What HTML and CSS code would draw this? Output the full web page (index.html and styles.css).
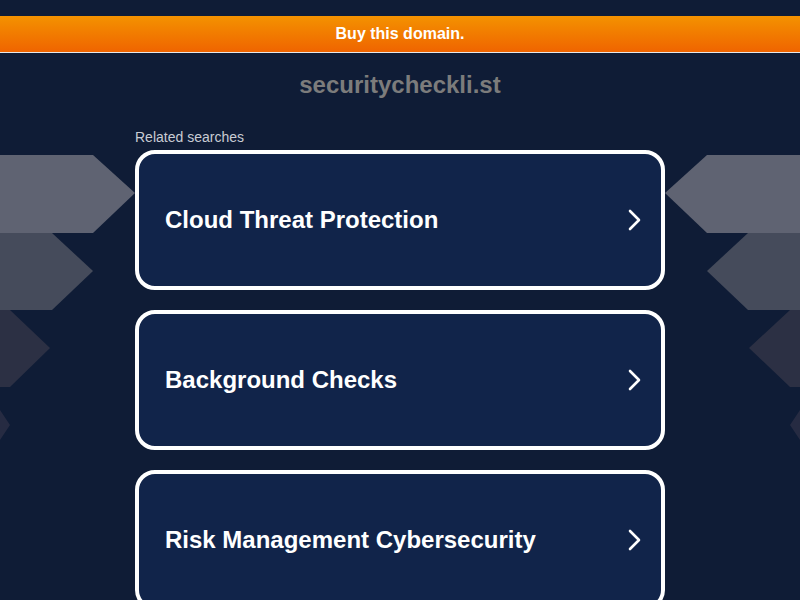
FILE: index.html
```html
<!DOCTYPE html>
<html>
<head>
<meta charset="utf-8">
<link rel="stylesheet" href="styles.css">
</head>
<body>
<div class="topgap"></div>
<div class="buybar">Buy this domain.</div>
<div class="domain">securitycheckli.st</div>
<svg class="deco deco-left" width="140" height="320" viewBox="0 0 140 320">
  <polygon points="0,0 93,0 135,38 93,78 0,78" fill="#5f6372"/>
  <polygon points="0,78 52,78 93,116 52,155 0,155" fill="#454b5b"/>
  <polygon points="0,155 10,155 50,193 10,232 0,232" fill="#2c3044"/>
  <polygon points="0,255 10,270 0,285" fill="#262b42"/>
</svg>
<svg class="deco deco-right" width="140" height="320" viewBox="0 0 140 320">
  <polygon points="140,0 47,0 5,38 47,78 140,78" fill="#5f6372"/>
  <polygon points="140,78 88,78 47,116 88,155 140,155" fill="#454b5b"/>
  <polygon points="140,155 130,155 89,193 130,232 140,232" fill="#2c3044"/>
  <polygon points="140,255 130,270 140,285" fill="#262b42"/>
</svg>
<main class="content">
  <div class="related">Related searches</div>
  <a class="card" href="#"><span class="label">Cloud Threat Protection</span><svg class="chev" width="14" height="22" viewBox="0 0 14 22"><polyline points="3,2 12,11 3,20" fill="none" stroke="#fff" stroke-width="2.6" stroke-linecap="round" stroke-linejoin="round"/></svg></a>
  <a class="card" href="#"><span class="label">Background Checks</span><svg class="chev" width="14" height="22" viewBox="0 0 14 22"><polyline points="3,2 12,11 3,20" fill="none" stroke="#fff" stroke-width="2.6" stroke-linecap="round" stroke-linejoin="round"/></svg></a>
  <a class="card" href="#"><span class="label">Risk Management Cybersecurity</span><svg class="chev" width="14" height="22" viewBox="0 0 14 22"><polyline points="3,2 12,11 3,20" fill="none" stroke="#fff" stroke-width="2.6" stroke-linecap="round" stroke-linejoin="round"/></svg></a>
</main>
</body>
</html>
```

FILE: styles.css
```css
html, body {
  margin: 0;
  padding: 0;
}
body {
  background: #0f1c36;
  font-family: "Liberation Sans", Arial, sans-serif;
  position: relative;
  height: 600px;
  overflow: hidden;
}
.topgap {
  height: 16px;
}
.buybar {
  height: 36px;
  line-height: 35px;
  background: linear-gradient(to bottom, #f49200, #ef6400);
  border-bottom: 1px solid #e8e8e8;
  color: #fff;
  font-weight: bold;
  font-size: 16px;
  text-align: center;
}
.domain {
  text-align: center;
  color: #7c7c7c;
  font-weight: bold;
  font-size: 24px;
  margin-top: 18px;
  line-height: 28px;
}
.deco {
  position: absolute;
  top: 155px;
}
.deco-left { left: 0; }
.deco-right { right: 0; }
.content {
  width: 530px;
  margin: 0 auto;
  padding-top: 30px;
  position: relative;
  z-index: 1;
}
.related {
  color: #c9ccd4;
  font-size: 14px;
  line-height: 16px;
  margin-bottom: 5px;
}
.card {
  display: flex;
  align-items: center;
  justify-content: space-between;
  box-sizing: border-box;
  height: 140px;
  margin-bottom: 20px;
  border: 4px solid #fff;
  border-radius: 20px;
  background: #11244a;
  padding: 0 20px 0 26px;
  text-decoration: none;
}
.label {
  color: #fff;
  font-weight: bold;
  font-size: 24px;
}
.chev {
  display: block;
}
```
